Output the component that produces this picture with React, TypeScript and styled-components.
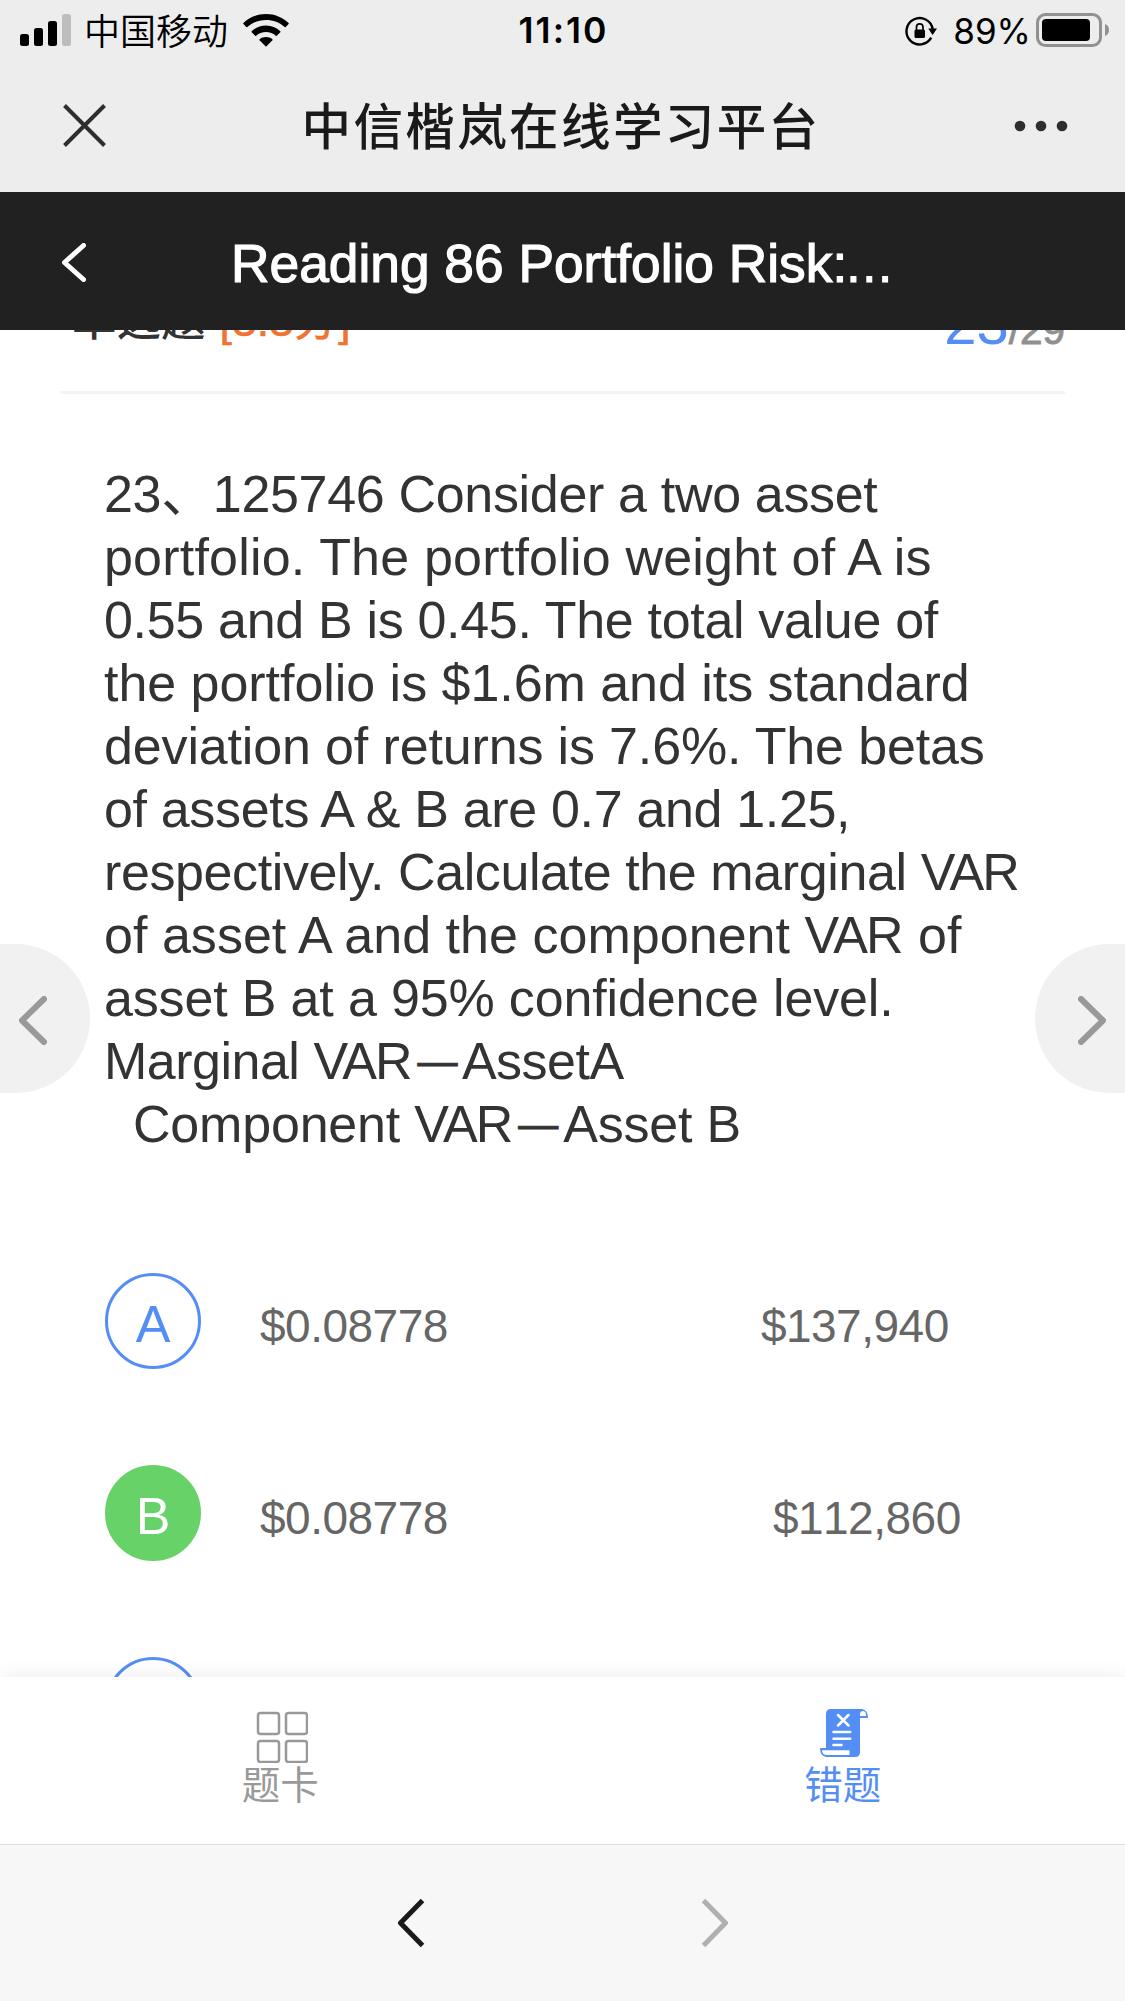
import React from "react";
import styled, { createGlobalStyle } from "styled-components";

const latin = `"Liberation Sans", "Noto Sans CJK SC", sans-serif`;
const blue = "#548ef5";

const GlobalStyle = createGlobalStyle`
  * { box-sizing: border-box; }
  body { margin: 0; background: #fff; font-family: ${latin}; }
`;

const Screen = styled.main`
  display: flex;
  flex-direction: column;
  position: relative;
  width: 1125px;
  height: 2001px;
  overflow: hidden;
  background: #fff;
`;

const StatusBar = styled.header`
  display: grid;
  grid-template-columns: 1fr auto 1fr;
  align-items: center;
  flex: none;
  height: 60px;
  padding: 0 15px 0 20px;
  background: #ededed;
  color: #000;
`;

const StatusGroup = styled.div<{ $end?: boolean }>`
  display: flex;
  align-items: center;
  justify-content: ${(p) => (p.$end ? "flex-end" : "flex-start")};
`;

const Carrier = styled.span`
  margin: 0 15px 2px 13px;
  font: 350 36px/54px "Noto Sans CJK SC", sans-serif;
`;

const Clock = styled.time`
  margin: 2px 3px 0 0;
  font: 600 35.5px/58px Inter, sans-serif;
  letter-spacing: 2px;
`;

const Battery = styled.span`
  margin: 2px 5px 0 15px;
  font: 400 35px/57px Inter, sans-serif;
`;

const AppBar = styled.div`
  display: flex;
  align-items: center;
  justify-content: space-between;
  flex: none;
  height: 132px;
  padding: 0 57px 0 62px;
  background: #ededed;
`;

const AppTitle = styled.h1`
  margin: -4px 0 0;
  color: #1a1a1a;
  font: 500 49.5px/70px "Noto Sans CJK SC", sans-serif;
  letter-spacing: 2.4px;
`;

const PageBar = styled.div`
  display: flex;
  align-items: center;
  flex: none;
  height: 138px;
  padding: 2px 0 0 62px;
  background: #212121;
`;

const PageTitle = styled.h2`
  margin: 4px 0 0 145px;
  color: #fff;
  font: 400 53.3px/70px ${latin};
  -webkit-text-stroke: 1.2px #fff;
  white-space: nowrap;
`;

const Ellipsis = styled.span`
  margin-left: -3px;
  font-size: 50px;
`;

const Content = styled.section`
  flex: 1;
  min-height: 0;
  overflow: hidden;
`;

const QuizHead = styled.div`
  display: flex;
  align-items: flex-end;
  justify-content: space-between;
  height: 64px;
  margin: 0 60px;
  padding: 0 0 40px 12px;
  border-bottom: 3px solid #f4f4f4;
`;

const QuizKind = styled.div`
  color: #333;
  font: 500 44.5px/60px "Noto Sans CJK SC", sans-serif;
`;

const Score = styled.span`
  margin-left: 14px;
  color: #f0732f;
  font-family: ${latin};
  font-weight: 400;
  -webkit-text-stroke: 0.6px #f0732f;
`;

const Progress = styled.div`
  margin-bottom: -9px;
  color: #8f8f8f;
  font: 400 40.5px/60px ${latin};
  -webkit-text-stroke: 0.9px #8f8f8f;
`;

const Current = styled.span`
  color: ${blue};
  font-size: 58px;
  -webkit-text-stroke: 0;
`;

const Question = styled.div`
  margin: 69px 0 0 104px;
  color: #333;
  font-size: 52px;
  line-height: 63px;
`;

const Line = styled.div<{ $track: number; $indent?: number }>`
  height: 63px;
  padding-left: ${(p) => p.$indent ?? 0}px;
  letter-spacing: ${(p) => p.$track}px;
  white-space: pre;
`;

const Acronym = styled.span`
  margin-right: 2px;
  letter-spacing: -2px;
`;

const Dash = styled.span`
  margin: 0 5px;
  font-size: 40px;
  line-height: 1;
  vertical-align: 4px;
  -webkit-text-stroke: 0.8px #333;
`;

const Options = styled.div`
  display: flex;
  flex-direction: column;
  gap: 96px;
  margin: 117px 0 0 105px;
`;

const Option = styled.div`
  display: flex;
  height: 96px;
`;

const Letter = styled.span<{ $correct?: boolean }>`
  width: 96px;
  height: 96px;
  padding-top: 3px;
  border: 3px solid ${(p) => (p.$correct ? "#67d268" : blue)};
  border-radius: 50%;
  background: ${(p) => (p.$correct ? "#67d268" : "transparent")};
  color: ${(p) => (p.$correct ? "#fff" : blue)};
  font-size: 52px;
  line-height: 90px;
  text-align: center;
`;

const Amount = styled.span<{ $gap: number }>`
  margin-left: ${(p) => p.$gap}px;
  color: #666;
  font-size: 46px;
  font-kerning: none;
  line-height: 106px;
  letter-spacing: -0.5px;
`;

const SideButton = styled.button<{ $side: "left" | "right" }>`
  position: absolute;
  top: 944px;
  ${(p) => p.$side}: 0;
  display: flex;
  align-items: center;
  justify-content: ${(p) => (p.$side === "left" ? "flex-start" : "flex-end")};
  width: 90px;
  height: 149px;
  padding: 4px 19px 0;
  border: 0;
  border-radius: ${(p) => (p.$side === "left" ? "0 75px 75px 0" : "75px 0 0 75px")};
  background: #f1f1f1;
`;

const Tabs = styled.nav`
  position: relative;
  display: grid;
  grid-template-columns: 1fr 1fr;
  flex: none;
  height: 167px;
  background: #fff;
  box-shadow: 0 -3px 18px rgba(0, 0, 0, 0.06);
`;

const Tab = styled.div<{ $active?: boolean }>`
  display: flex;
  flex-direction: column;
  align-items: center;
  padding-top: 32px;
  color: ${(p) => (p.$active ? blue : "#999")};
`;

const TabLabel = styled.span`
  margin: -8px 2px 0 0;
  font: 400 38.5px/54px "Noto Sans CJK SC", sans-serif;
`;

const BrowserBar = styled.footer`
  position: relative;
  display: flex;
  justify-content: center;
  align-items: center;
  gap: 276px;
  flex: none;
  height: 157px;
  border-top: 1px solid #dedede;
  background: #f7f7f7;
`;

const questionLines = [
  { text: "23、125746 Consider a two asset", track: -0.33 },
  { text: "portfolio. The portfolio weight of A is", track: 0.2 },
  { text: "0.55 and B is 0.45. The total value of", track: -0.32 },
  { text: "the portfolio is $1.6m and its standard", track: -0.04 },
  { text: "deviation of returns is 7.6%. The betas", track: -0.15 },
  { text: "of assets A & B are 0.7 and 1.25,", track: -0.34 },
  { text: "respectively. Calculate the marginal VAR", track: -0.4 },
  { text: "of asset A and the component VAR of", track: 0.03 },
  { text: "asset B at a 95% confidence level.", track: -0.16 },
  { text: "Marginal VAR—AssetA", track: -0.5 },
  { text: "Component VAR—Asset B", track: -0.2, indent: 29 },
];

const options = [
  { letter: "A", first: "$0.08778", second: "$137,940", gap: 313 },
  { letter: "B", first: "$0.08778", second: "$112,860", gap: 325, correct: true },
  { letter: "C", first: "", second: "", gap: 0 },
];

function setType(text: string) {
  return text.split(/(VAR|—)/).map((part, i) => {
    if (part === "VAR") return <Acronym key={i}>{part}</Acronym>;
    if (part === "—") return <Dash key={i}>{part}</Dash>;
    return part;
  });
}

function SignalIcon() {
  return (
    <svg width="51" height="32" viewBox="0 0 51 32">
      <rect y="20" width="9" height="12" rx="2.5" />
      <rect x="14" y="14" width="9" height="18" rx="2.5" />
      <rect x="28" y="7" width="9" height="25" rx="2.5" />
      <rect x="42" width="9" height="32" rx="2.5" fill="#bdbdbd" />
    </svg>
  );
}

function WifiIcon() {
  return (
    <svg width="46" height="33" viewBox="0 0 46 33">
      <path d="M23 0C14.300 0 6.300 3.400.400 9Q0 9.500.400 10L3.300 13Q3.800 13.500 4.300 13C9.300 8.500 15.800 6 23 6S36.700 8.500 41.700 13Q42.200 13.500 42.700 13L45.600 10Q46 9.500 45.600 9C39.700 3.400 31.700 0 23 0Z" />
      <path d="M23 11.500C17.500 11.500 12.500 13.700 8.700 17.200Q8.300 17.700 8.700 18.200L12.200 21.700Q12.700 22.200 13.200 21.700C15.900 19.300 19.300 18 23 18S30.100 19.300 32.800 21.700Q33.300 22.200 33.800 21.700L37.300 18.200Q37.700 17.700 37.300 17.200C33.500 13.700 28.500 11.500 23 11.500Z" />
      <path d="M23 23C20.500 23 18.300 23.900 16.600 25.300Q16.200 25.800 16.600 26.300L22.500 32.300Q23 32.800 23.500 32.300L29.400 26.300Q29.800 25.800 29.400 25.300C27.700 23.900 25.500 23 23 23Z" />
    </svg>
  );
}

function RotationLockIcon() {
  return (
    <svg width="33" height="32" viewBox="0 -2 33 32">
      <path d="M26.200 21.700A13.200 13.200 0 1 1 27.700 13" fill="none" stroke="#000" strokeWidth="2.400" />
      <path d="M23.300 12.500H32L28 18.500Q27.600 19 27.200 18.500Z" />
      <rect x="9.500" y="13.500" width="10.500" height="8.500" rx="1.500" />
      <path d="M11.500 14.500V11Q11.500 7.800 14.700 7.800T18 11V14.500" fill="none" stroke="#000" strokeWidth="1.700" />
    </svg>
  );
}

function BatteryIcon() {
  return (
    <svg width="74" height="34" viewBox="0 0 74 34">
      <rect x="1.500" y="1.500" width="63" height="31" rx="8" fill="none" stroke="#919191" strokeWidth="3" />
      <rect x="6" y="6" width="48" height="22" rx="4" />
      <path d="M69 11Q73 12.500 73 17T69 23Z" fill="#919191" />
    </svg>
  );
}

type ChevronProps = {
  width: number;
  height: number;
  stroke: number;
  color: string;
  right?: boolean;
  round?: boolean;
};

function Chevron({ width, height, stroke, color, right, round }: ChevronProps) {
  const s = stroke / 2;
  const tip = right ? width - s : s;
  const end = right ? s : width - s;
  return (
    <svg width={width} height={height}>
      <path
        d={`M${end} ${s}L${tip} ${height / 2}L${end} ${height - s}`}
        fill="none"
        stroke={color}
        strokeWidth={stroke}
        strokeLinecap={round ? "round" : "butt"}
        strokeLinejoin="round"
      />
    </svg>
  );
}

function GridIcon() {
  return (
    <svg width="53" height="54" viewBox="-2 -3 53 54" fill="none" stroke="#999" strokeWidth="2.5">
      <rect x="1" y="1" width="21" height="21" rx="2.500" />
      <rect x="29" y="1" width="21" height="21" rx="2.500" />
      <rect x="1" y="29" width="21" height="21" rx="2.500" />
      <rect x="29" y="29" width="21" height="21" rx="2.500" />
    </svg>
  );
}

function ScrollIcon() {
  return (
    <svg width="48" height="54" viewBox="0 0 48 54">
      <path d="M11 0H42Q48 1 48 9H40V43Q40 48 35 48H6Q0 47 0 39H6V5Q6 0 11 0Z" fill={blue} />
      <path d="M40 7V5Q40.300 2 43 2T46 5.500V7Z" fill="#fff" />
      <path d="M2 41.300H29.500V46H6Q2 45.500 2 41.300Z" fill="#fff" />
      <path
        d="M18 6L28.500 16.500M28.500 6L18 16.500M13.500 23H30.200M13.500 29.700H30.200M13.500 36H21.500"
        fill="none"
        stroke="#fff"
        strokeWidth="2.500"
        strokeLinecap="round"
      />
    </svg>
  );
}

export default function App() {
  return (
    <Screen>
      <GlobalStyle />
      <StatusBar>
        <StatusGroup>
          <SignalIcon />
          <Carrier>中国移动</Carrier>
          <WifiIcon />
        </StatusGroup>
        <Clock>11:10</Clock>
        <StatusGroup $end>
          <RotationLockIcon />
          <Battery>89%</Battery>
          <BatteryIcon />
        </StatusGroup>
      </StatusBar>
      <AppBar>
        <svg width="46" height="46">
          <path d="M2.500 2.500L42.500 42.500M42.500 2.500L2.500 42.500" stroke="#2e2e2e" strokeWidth="4" />
        </svg>
        <AppTitle>中信楷岚在线学习平台</AppTitle>
        <svg width="54" height="12" fill="#2e2e2e">
          <circle cx="6" cy="6" r="5.300" />
          <circle cx="27" cy="6" r="5.300" />
          <circle cx="48" cy="6" r="5.300" />
        </svg>
      </AppBar>
      <PageBar>
        <Chevron width={24} height={39} stroke={5} color="#fff" round />
        <PageTitle>
          Reading 86 Portfolio Risk:<Ellipsis>…</Ellipsis>
        </PageTitle>
      </PageBar>
      <Content>
        <QuizHead>
          <QuizKind>
            单选题<Score>[3.3分]</Score>
          </QuizKind>
          <Progress>
            <Current>23</Current>/29
          </Progress>
        </QuizHead>
        <Question>
          {questionLines.map((l) => (
            <Line key={l.text} $track={l.track} $indent={l.indent}>
              {setType(l.text)}
            </Line>
          ))}
        </Question>
        <Options>
          {options.map((o) => (
            <Option key={o.letter}>
              <Letter $correct={o.correct}>{o.letter}</Letter>
              <Amount $gap={59}>{o.first}</Amount>
              <Amount $gap={o.gap}>{o.second}</Amount>
            </Option>
          ))}
        </Options>
      </Content>
      <SideButton $side="left" aria-label="Previous question">
        <Chevron width={28} height={49} stroke={6} color="#999" round />
      </SideButton>
      <SideButton $side="right" aria-label="Next question">
        <Chevron width={28} height={49} stroke={6} color="#999" round right />
      </SideButton>
      <Tabs>
        <Tab>
          <GridIcon />
          <TabLabel>题卡</TabLabel>
        </Tab>
        <Tab $active>
          <ScrollIcon />
          <TabLabel>错题</TabLabel>
        </Tab>
      </Tabs>
      <BrowserBar>
        <Chevron width={27} height={50} stroke={5} color="#1a1a1a" />
        <Chevron width={27} height={50} stroke={5} color="#b0b0b0" right />
      </BrowserBar>
    </Screen>
  );
}
